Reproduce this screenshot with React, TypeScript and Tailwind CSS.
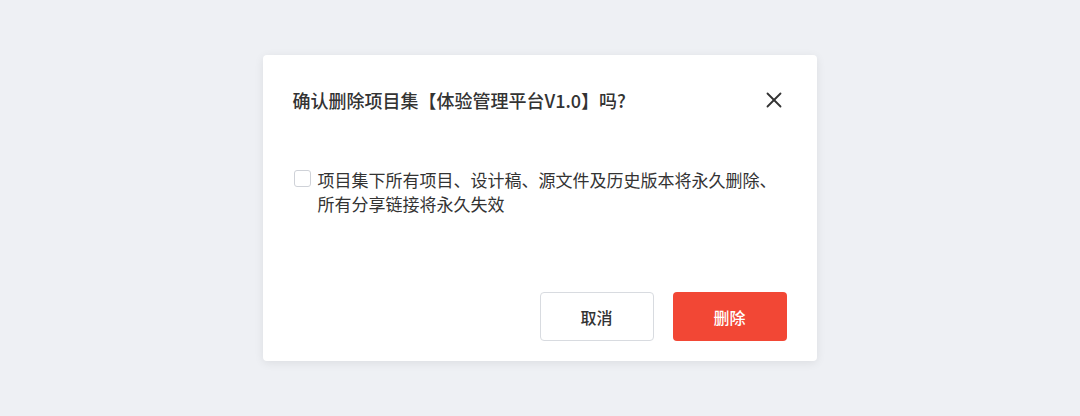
import { X } from "lucide-react";

const font = { fontFamily: '"Noto Sans CJK SC", "Noto Sans", sans-serif' };

export default function App() {
  return (
    <div className="w-[1080px] h-[416px] bg-[#eef0f4] flex items-start justify-center pt-[55px]" style={font}>
      <div className="w-[554px] h-[306px] bg-white rounded-[4px] shadow-[0_2px_10px_rgba(0,0,0,0.08)] flex flex-col ml-[-1px]">
        <div className="flex items-center justify-between pl-[30px] pr-[30px] pt-[30px] h-[60px]">
          <h2 className="text-[18px] leading-[30px] font-medium text-[#333]">确认删除项目集【体验管理平台V1.0】吗?</h2>
          <button className="text-[#333]" aria-label="关闭">
            <X size={26} strokeWidth={1.7} />
          </button>
        </div>
        <label className="flex items-start gap-[7px] pl-[31px] pr-[10px] mt-[53px]">
          <span className="mt-[2px] w-[17px] h-[17px] shrink-0 rounded-[3px] border border-[#cfd2d8] bg-white" />
          <span className="text-[17px] leading-[24px] text-[#333]">
            项目集下所有项目、设计稿、源文件及历史版本将永久删除、
            <br />
            所有分享链接将永久失效
          </span>
        </label>
        <div className="mt-auto flex justify-end gap-[19px] pr-[30px] pb-[20px]">
          <button className="w-[114px] h-[49px] rounded-[4px] border border-[#d8dbe0] bg-white text-[16px] font-medium text-[#333]">
            取消
          </button>
          <button className="w-[114px] h-[49px] rounded-[4px] bg-[#f24735] text-[16px] font-medium text-white">
            删除
          </button>
        </div>
      </div>
    </div>
  );
}
